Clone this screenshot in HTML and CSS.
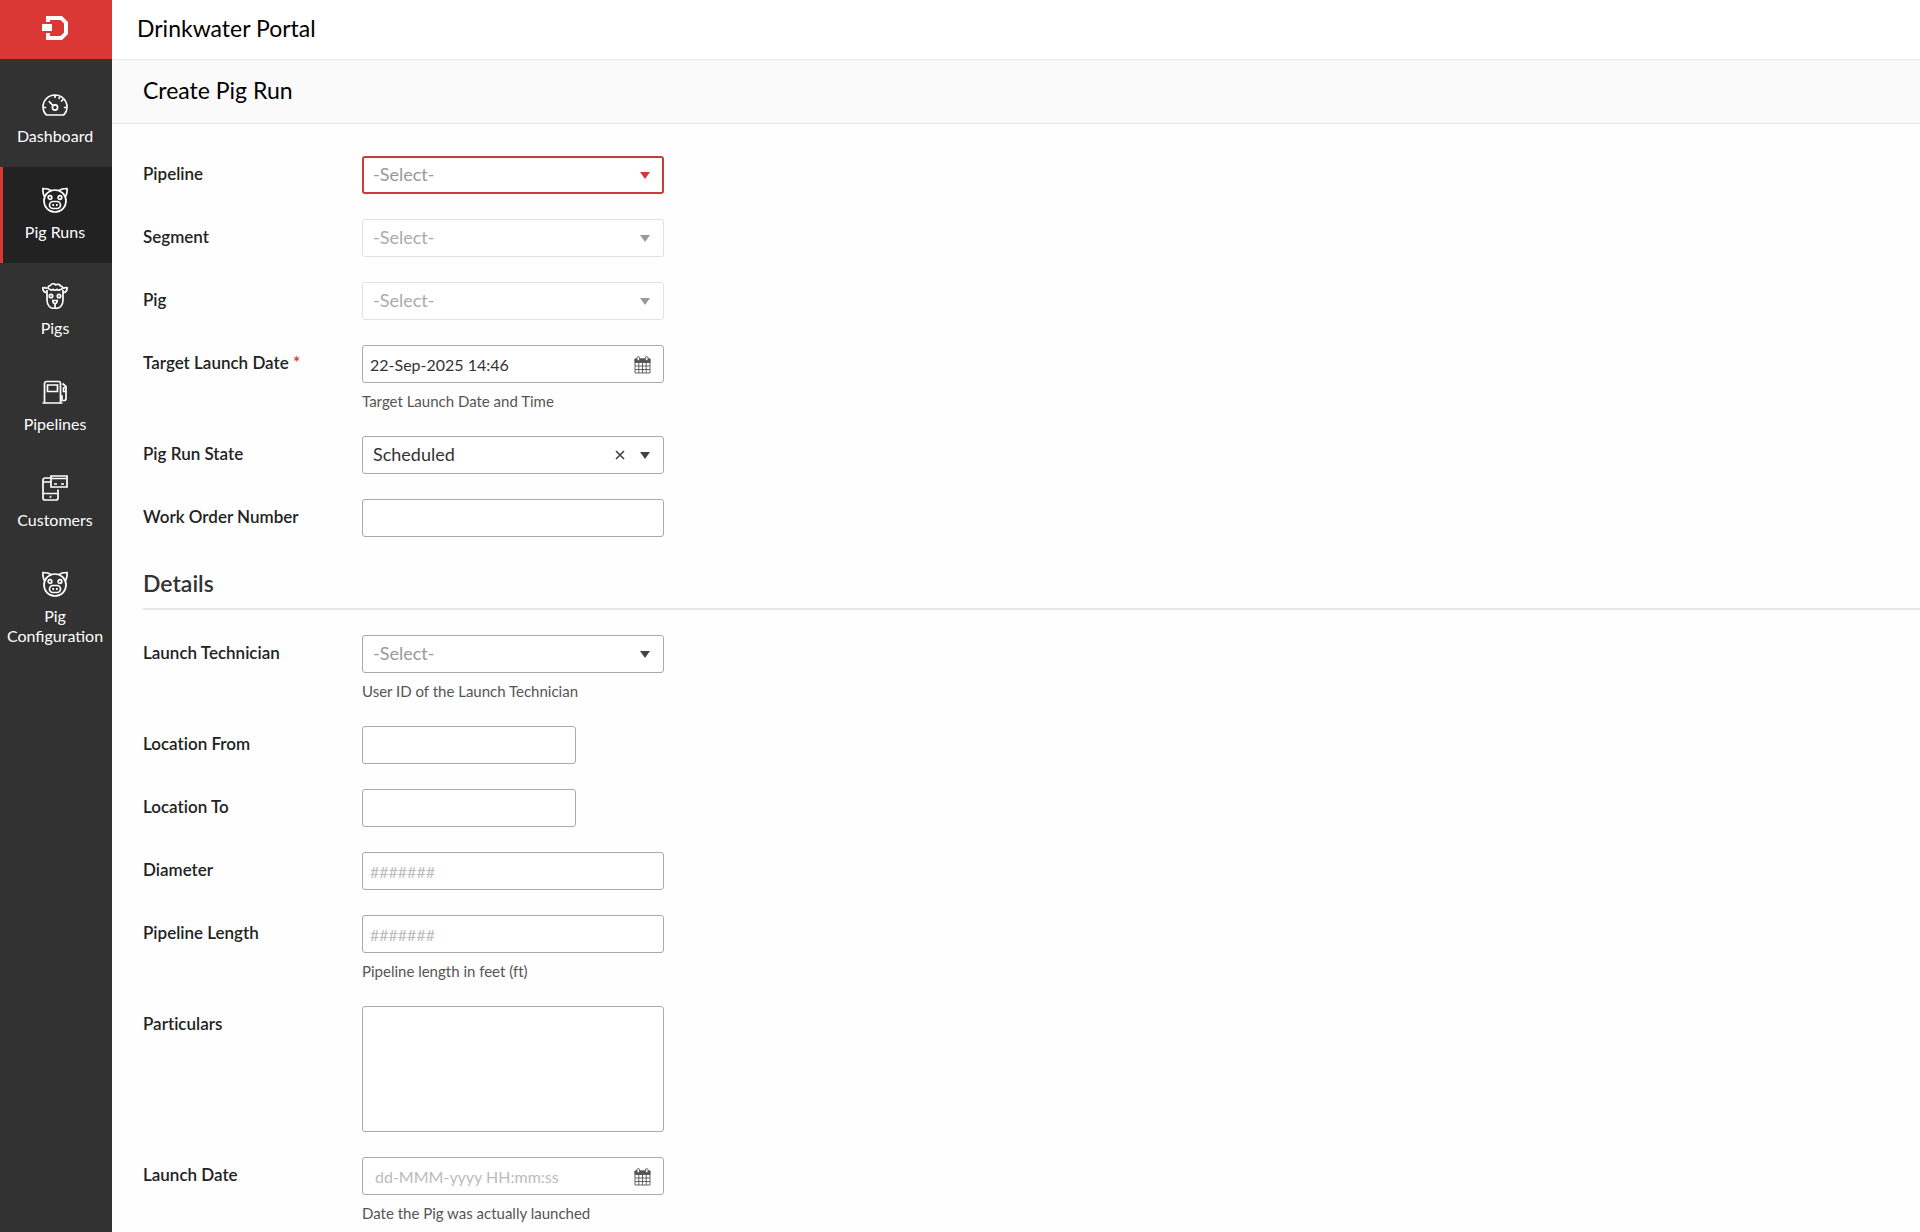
FILE: index.html
```
<!DOCTYPE html>
<html lang="en">
<head>
  <meta charset="UTF-8">
  <meta name="viewport" content="width=device-width, initial-scale=1.0">
  <title>Drinkwater Portal - Create Pig Run</title>
  <link rel="stylesheet" href="styles.css">
</head>
<body>

  <!-- shared icons -->
  <svg class="sprite" aria-hidden="true">
    <symbol id="icon-pig" viewBox="0 0 26 26">
      <circle cx="13" cy="14" r="11"/>
      <path d="M2.800 10.500C1.200 7.500.6 4.500 1 1.500c3 0 6 .5 8.500 2.200M23.200 10.500C24.800 7.500 25.400 4.500 25 1.500c-3 0-6 .5-8.500 2.200"/>
      <circle cx="8" cy="10.500" r="1.800"/>
      <circle cx="18" cy="10.500" r="1.800"/>
      <rect x="7.500" y="14.500" width="11" height="7" rx="3.500"/>
      <path d="M11.200 17v2M14.800 17v2"/>
    </symbol>
    <symbol id="icon-arrow" viewBox="0 0 10 7">
      <path d="M0 0h10L5 7z"/>
    </symbol>
    <symbol id="icon-calendar" viewBox="0 0 17 18">
      <path class="fill" d="M1 3h15v3.500H1z"/>
      <path d="M1 3h15v14H1zM1 10h15M1 13.500h15M4.800 6v11M8.500 6v11M12.200 6v11"/>
      <rect class="ring" x="3" y=".6" width="2.600" height="4" rx="1.300"/>
      <rect class="ring" x="11.400" y=".6" width="2.600" height="4" rx="1.300"/>
    </symbol>
  </svg>

  <div class="layout">
    <aside class="sidebar">
      <a class="logo" href="#" aria-label="Home">
        <svg viewBox="0 0 26 24" width="26" height="24">
          <path fill="#fff" d="M4 0h16l6 6v12l-6 6H4v-7h4v3h10.500l3.500-3.500v-9L18.500 4H8v2H4zM0 8h10v7H0z"/>
        </svg>
      </a>
      <nav class="menu">
        <a class="menu-item" href="#">
          <svg class="menu-icon" viewBox="0 0 26 26">
            <path d="M4.500 24C2.300 22 1 19.300 1 16a12 12 0 0 1 24 0c0 3.300-1.300 6-3.500 8z"/>
            <circle cx="13" cy="16.500" r="2.600"/>
            <path d="M11 14.500L6.800 10.200M13 4v3M1 16.500h3.200M21.800 16.500H25M19 10.500l2.200-2.200M16.800 7.800l1-2"/>
          </svg>
          <span>Dashboard</span>
        </a>
        <a class="menu-item active" href="#">
          <svg class="menu-icon"><use href="#icon-pig"/></svg>
          <span>Pig Runs</span>
        </a>
        <a class="menu-item" href="#">
          <svg class="menu-icon" viewBox="0 0 26 26">
            <path d="M5 7v10c0 5.500 3.500 8.500 8 8.500s8-3 8-8.500V7"/>
            <path d="M8 6.500c-2.500-.5-2.500-4 .5-4 1-2.200 4-2.200 5-.7 2-1 4.500-.5 5 1.200 2.800.3 2.600 3.300.3 3.500-1.500.8-3 .6-3.800-.2-1.300 1.100-2.800 1.100-4 0-.8.700-2 .8-3 .2z"/>
            <path d="M5.500 5.500C3.500 4.600 2 4.600.8 4.800 1 8 2.500 9.500 5 9.500M20.500 5.500c2-.9 3.500-.9 4.700-.7C25 8 23.500 9.500 21 9.500"/>
            <circle cx="9" cy="13" r="1.700"/>
            <circle cx="17" cy="13" r="1.700"/>
            <path d="M10.800 17.500h4.400c0 1.800-1 3-2.200 3.300-1.200-.3-2.200-1.500-2.200-3.300zM13 21v4"/>
          </svg>
          <span>Pigs</span>
        </a>
        <a class="menu-item" href="#">
          <svg class="menu-icon" viewBox="0 0 26 26">
            <path d="M2.500 24V4.500a2 2 0 0 1 2-2h12a2 2 0 0 1 2 2V24M.5 24h20M5.500 6h10v6.500h-10z"/>
            <path d="M20.500 4.500l3.500 3v5h-2.500V9l2.500-1M24 12.500V20a1.800 1.800 0 0 1-1.800 1.500H20V17h-1.500"/>
          </svg>
          <span>Pipelines</span>
        </a>
        <a class="menu-item" href="#">
          <svg class="menu-icon" viewBox="0 0 26 26">
            <path d="M9 3H3a2 2 0 0 0-2 2v18a2 2 0 0 0 2 2h11a2 2 0 0 0 2-2v-8.500M1 7h8M1 18.500h15M8.500 20.800v2"/>
            <path d="M9 1h16v11H9zM9 3.500h16M12 9h3M19 9h3"/>
          </svg>
          <span>Customers</span>
        </a>
        <a class="menu-item" href="#">
          <svg class="menu-icon"><use href="#icon-pig"/></svg>
          <span>Pig Configuration</span>
        </a>
      </nav>
    </aside>

    <main class="content">
      <header class="topbar">Drinkwater Portal</header>
      <h1 class="page-title">Create Pig Run</h1>

      <form class="form">
        <div class="form-row">
          <label for="pipeline">Pipeline</label>
          <div class="field">
            <div class="control">
              <select class="placeholder invalid" id="pipeline"><option>-Select-</option></select>
              <svg class="arrow arrow-red"><use href="#icon-arrow"/></svg>
            </div>
          </div>
        </div>
        <div class="form-row">
          <label for="segment">Segment</label>
          <div class="field">
            <div class="control">
              <select id="segment" disabled><option>-Select-</option></select>
              <svg class="arrow arrow-grey"><use href="#icon-arrow"/></svg>
            </div>
          </div>
        </div>
        <div class="form-row">
          <label for="pig">Pig</label>
          <div class="field">
            <div class="control">
              <select id="pig" disabled><option>-Select-</option></select>
              <svg class="arrow arrow-grey"><use href="#icon-arrow"/></svg>
            </div>
          </div>
        </div>
        <div class="form-row">
          <label for="targetDate">Target Launch Date <span class="required">*</span></label>
          <div class="field">
            <div class="control">
              <input type="text" id="targetDate" value="22-Sep-2025 14:46">
              <button class="calendar-btn" type="button" aria-label="Pick target launch date"><svg><use href="#icon-calendar"/></svg></button>
            </div>
            <p class="help">Target Launch Date and Time</p>
          </div>
        </div>
        <div class="form-row">
          <label for="runState">Pig Run State</label>
          <div class="field">
            <div class="control">
              <select id="runState"><option>Scheduled</option></select>
              <button class="clear-btn" type="button" aria-label="Clear"><svg viewBox="0 0 10 10"><path d="M1 1l8 8M9 1L1 9"/></svg></button>
              <svg class="arrow"><use href="#icon-arrow"/></svg>
            </div>
          </div>
        </div>
        <div class="form-row">
          <label for="workOrder">Work Order Number</label>
          <div class="field">
            <input type="text" id="workOrder">
          </div>
        </div>

        <h2 class="section-title">Details</h2>

        <div class="form-row">
          <label for="technician">Launch Technician</label>
          <div class="field">
            <div class="control">
              <select class="placeholder" id="technician"><option>-Select-</option></select>
              <svg class="arrow"><use href="#icon-arrow"/></svg>
            </div>
            <p class="help">User ID of the Launch Technician</p>
          </div>
        </div>
        <div class="form-row">
          <label for="locationFrom">Location From</label>
          <div class="field short">
            <input type="text" id="locationFrom">
          </div>
        </div>
        <div class="form-row">
          <label for="locationTo">Location To</label>
          <div class="field short">
            <input type="text" id="locationTo">
          </div>
        </div>
        <div class="form-row">
          <label for="diameter">Diameter</label>
          <div class="field">
            <input type="text" id="diameter" placeholder="#######">
          </div>
        </div>
        <div class="form-row">
          <label for="pipelineLength">Pipeline Length</label>
          <div class="field">
            <input type="text" id="pipelineLength" placeholder="#######">
            <p class="help">Pipeline length in feet (ft)</p>
          </div>
        </div>
        <div class="form-row">
          <label for="particulars">Particulars</label>
          <div class="field">
            <textarea id="particulars"></textarea>
          </div>
        </div>
        <div class="form-row">
          <label for="launchDate">Launch Date</label>
          <div class="field">
            <div class="control">
              <input class="date-empty" type="text" id="launchDate" placeholder="dd-MMM-yyyy HH:mm:ss">
              <button class="calendar-btn" type="button" aria-label="Pick launch date"><svg><use href="#icon-calendar"/></svg></button>
            </div>
            <p class="help">Date the Pig was actually launched</p>
          </div>
        </div>
      </form>
    </main>
  </div>

</body>
</html>
```

FILE: styles.css
```
* {
  box-sizing: border-box;
}

body {
  margin: 0;
  font-family: Lato, sans-serif;
  font-size: 16px;
  color: #222;
  background-color: #fefefe;
}

.sprite {
  display: none;
}

.layout {
  display: flex;
  min-height: 100vh;
}

/* sidebar */
.sidebar {
  flex: 0 0 112px;
  background-color: #323232;
}

.logo {
  display: flex;
  justify-content: center;
  align-items: center;
  height: 59px;
  padding: 0 2px 4px 0;
  background-color: #db3735;
}

.menu {
  padding-top: 12px;
}

.menu-item {
  display: flex;
  flex-direction: column;
  align-items: center;
  gap: 9px;
  min-height: 96px;
  padding: 20px 5px 12px 0;
  border-left: 3px solid transparent;
  font-size: 16px;
  line-height: 20px;
  text-align: center;
  text-decoration: none;
  color: #fff;
}

.menu-item.active {
  border-left-color: #db3735;
  background-color: #222;
}

.menu-icon {
  width: 26px;
  height: 26px;
  fill: none;
  stroke: #fff;
  stroke-width: 1.7;
}

/* header */
.content {
  flex: 1;
  min-width: 0;
}

.topbar {
  height: 60px;
  padding: 0 25px;
  border-bottom: 1px solid #e6e6e6;
  font-size: 23px;
  line-height: 56px;
  color: #000;
  background-color: #fff;
}

.page-title {
  height: 64px;
  margin: 0;
  padding: 0 31px;
  border-bottom: 1px solid #e6e6e6;
  font-size: 23px;
  font-weight: 400;
  line-height: 60px;
  color: #000;
  background-color: #fafafa;
}

/* form */
.form {
  padding: 32px 0 0 31px;
}

.form-row {
  display: flex;
  align-items: flex-start;
  margin-bottom: 25px;
}

.form-row:last-child {
  margin-bottom: 0;
}

.form-row label {
  flex: 0 0 219px;
  font-size: 17px;
  font-weight: 600;
  line-height: 36px;
  font-variant-ligatures: none;
}

.required {
  color: #db3735;
}

.field {
  width: 302px;
}

.field.short {
  width: 214px;
}

.control {
  position: relative;
}

input,
select,
textarea {
  display: block;
  width: 100%;
  height: 38px;
  padding: 0 7px;
  border: 1px solid #aaa;
  border-radius: 3px;
  font-family: inherit;
  font-size: 16px;
  color: #333;
  background-color: #fff;
}

select {
  padding: 0 48px 2px 10px;
  font-size: 18px;
  appearance: none;
}

select.placeholder {
  color: #999;
}

select:disabled {
  border-color: #e2e2e2;
  color: #aaa;
  opacity: 1;
}

select.invalid {
  padding-left: 9px;
  border: 2px solid #c93c3c;
}

textarea {
  height: 126px;
  resize: none;
}

.date-empty {
  padding-left: 12px;
}

::placeholder {
  color: #bbb;
}

.arrow {
  position: absolute;
  top: 16px;
  right: 14px;
  width: 10px;
  height: 7px;
  fill: #444;
  pointer-events: none;
}

.arrow-red {
  fill: #c93c3c;
}

.arrow-grey {
  fill: #999;
}

.clear-btn,
.calendar-btn {
  position: absolute;
  padding: 0;
  border: none;
  background: none;
  cursor: pointer;
}

.clear-btn {
  top: 14px;
  right: 39px;
}

.clear-btn svg {
  display: block;
  width: 10px;
  height: 10px;
  stroke: #444;
  stroke-width: 1.6;
}

.calendar-btn {
  top: 11px;
  right: 13px;
}

.calendar-btn svg {
  display: block;
  width: 17px;
  height: 18px;
  fill: none;
  stroke: #555;
  stroke-width: 0.9;
}

.fill {
  fill: #555;
}

.ring {
  fill: #fff;
}

.help {
  margin: 8px 0 0;
  font-size: 15px;
  line-height: 20px;
  font-variant-ligatures: none;
  color: #555;
}

.section-title {
  margin: 0 0 25px;
  padding: 4px 0 8px;
  border-bottom: 2px solid #e6e6e6;
  font-size: 23px;
  font-weight: 600;
  line-height: 34px;
  color: #333;
}
```
